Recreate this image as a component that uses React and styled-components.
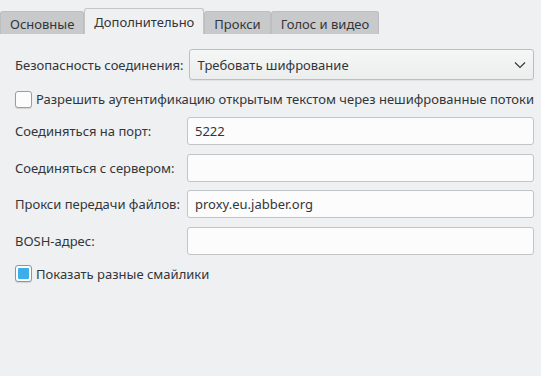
import styled, { createGlobalStyle } from "styled-components";

const GlobalStyle = createGlobalStyle`
  body {
    margin: 0;
    background: #eff0f1;
    font-family: "Noto Sans", "Open Sans", sans-serif;
    font-size: 13px;
    color: #31363b;
  }
`;

const tabs = ["Основные", "Дополнительно", "Прокси", "Голос и видео"];

const fields = [
  { label: "Соединяться на порт:", value: "5222" },
  { label: "Соединяться с сервером:", value: "" },
  { label: "Прокси передачи файлов:", value: "proxy.eu.jabber.org" },
  { label: "BOSH-адрес:", value: "" },
];

const App = () => {
  return (
    <Window>
      <GlobalStyle />
      <TabBar>
        {tabs.map((t, i) => (
          <Tab key={t} $active={i === 1}>
            {t}
          </Tab>
        ))}
      </TabBar>

      <Panel>
        <SecurityRow>
          <Label>Безопасность соединения:</Label>
          <Combo>
            <span>Требовать шифрование</span>
            <svg width="12" height="8" viewBox="0 0 12 8">
              <path d="M1 1.5 L6 6.5 L11 1.5" fill="none" stroke="#31363b" strokeWidth="1.1" />
            </svg>
          </Combo>
        </SecurityRow>

        <CheckRow>
          <CheckBox />
          <span>Разрешить аутентификацию открытым текстом через нешифрованные потоки</span>
        </CheckRow>

        <FormGrid>
          {fields.map((f) => (
            <FormRow key={f.label}>
              <Label>{f.label}</Label>
              <Field>{f.value}</Field>
            </FormRow>
          ))}
        </FormGrid>

        <CheckRow>
          <CheckBox $checked />
          <span>Показать разные смайлики</span>
        </CheckRow>
      </Panel>
    </Window>
  );
};

const Window = styled.div`
  width: 541px;
  height: 376px;
  overflow: hidden;
`;

const TabBar = styled.div`
  display: flex;
  align-items: flex-end;
  height: 34px;
`;

const Tab = styled.div`
  box-sizing: border-box;
  height: ${(p) => (p.$active ? "26px" : "23px")};
  padding: 0 9px;
  padding-top: ${(p) => (p.$active ? "0" : "2px")};
  display: flex;
  align-items: center;
  background: ${(p) => (p.$active ? "#eff0f1" : "#c8c9cb")};
  border: 1px solid ${(p) => (p.$active ? "#c4c5c7" : "#bdbec0")};
  border-bottom: none;
  border-radius: 3px 3px 0 0;
  white-space: nowrap;
  color: #31363b;
`;

const Panel = styled.div`
  padding: 15px 7px 0 15px;
`;

const SecurityRow = styled.div`
  display: flex;
  align-items: center;
  gap: 5px;
`;

const Label = styled.span`
  white-space: nowrap;
`;

const Combo = styled.div`
  flex: 1;
  box-sizing: border-box;
  height: 31px;
  display: flex;
  align-items: center;
  justify-content: space-between;
  padding: 0 7px 0 8px;
  background: linear-gradient(#f5f6f6, #eceded);
  border: 1px solid #bcbebf;
  border-radius: 3px;
  box-shadow: 0 1px 1px rgba(0, 0, 0, 0.06);
`;

const CheckRow = styled.div`
  display: flex;
  align-items: center;
  gap: 4px;
  margin: 10px 0 9px 0;
  white-space: nowrap;
`;

const CheckBox = styled.span`
  box-sizing: border-box;
  width: 17px;
  height: 17px;
  border-radius: 3px;
  border: 1px solid ${(p) => (p.$checked ? "#7a9bb3" : "#9a9d9f")};
  background: #fcfcfc;
  box-shadow: 0 1px 1px rgba(0, 0, 0, 0.12);
  flex-shrink: 0;
  padding: 2px;

  &::after {
    content: "";
    display: ${(p) => (p.$checked ? "block" : "none")};
    width: 100%;
    height: 100%;
    background: #3daee9;
    border-radius: 1px;
  }
`;

const FormGrid = styled.div`
  display: flex;
  flex-direction: column;
  gap: 8.5px;
`;

const FormRow = styled.div`
  display: grid;
  grid-template-columns: 172px 1fr;
  align-items: center;
`;

const Field = styled.div`
  box-sizing: border-box;
  height: 28px;
  display: flex;
  align-items: center;
  padding: 0 7px;
  background: #fcfcfc;
  border: 1px solid #c2c4c5;
  border-radius: 3px;
`;

export default App;
